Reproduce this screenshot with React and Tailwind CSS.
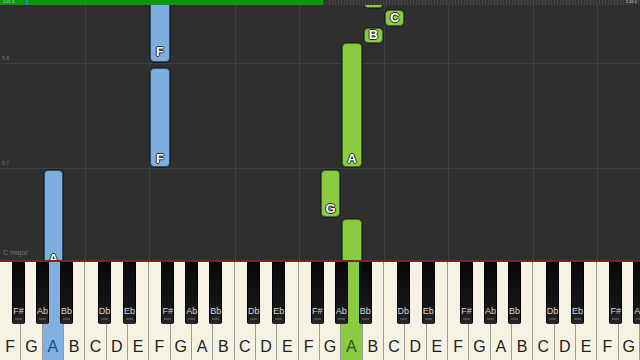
import React from "react";

const KW = 640 / 30;
const WHITE = ["F","G","A","B","C","D","E"];
const whiteKeys = Array.from({ length: 30 }, (_, i) => WHITE[i % 7]);
const BLACK = [
  { o: 12, l: "F#" },
  { o: 36, l: "Ab" },
  { o: 60, l: "Bb" },
  { o: 98, l: "Db" },
  { o: 123, l: "Eb" },
];
const blackKeys = [];
for (let k = 0; k < 5; k++) {
  for (const b of BLACK) {
    const x = k * KW * 7 + b.o;
    if (x < 640) blackKeys.push({ x, l: b.l });
  }
}

// notes: key index, top, bottom (page y), color, label
const notes = [
  { k: 7, t: -4, b: 62, c: "blue", l: "F", lb: 51 },
  { k: 7, t: 68, b: 167, c: "blue", l: "F" },
  { k: 2, t: 170, b: 270, c: "blue", l: "A", lb: 258 },
  { k: 16, t: 43, b: 167, c: "green", l: "A" },
  { k: 15, t: 170, b: 217, c: "green", l: "G" },
  { k: 16, t: 219, b: 290, c: "green", l: "" },
  { k: 17, t: 28, b: 43, c: "green", l: "B" },
  { k: 18, t: 10, b: 26, c: "green", l: "C" },
  { k: 17, t: -12, b: 8, c: "green", l: "B" },
];

const vLines = [4, 7, 11, 14, 18, 21, 25, 28];

function Note({ n }) {
  const blue = n.c === "blue";
  const top = n.t - 5;
  const h = n.b - n.t;
  const labelY = (n.lb ?? n.b - 9) - 5;
  return (
    <>
      <div
        className={
          "absolute rounded-[4px] border " +
          (blue
            ? "bg-[#7eaedd] border-[#2c4d6e] shadow-[0_0_0_1px_#1f1f1f]"
            : "bg-[#8acb42] border-[#3d6b17] shadow-[0_0_0_1px_#1f1f1f]")
        }
        style={{ left: n.k * KW + 1, width: KW - 2, top, height: h }}
      />
      {n.l && (
        <div
          className="absolute flex items-center justify-center text-[13px] font-bold text-white leading-none [text-shadow:-1px_0_#2a2a2a,1px_0_#2a2a2a,0_-1px_#2a2a2a,0_1px_#2a2a2a]"
          style={{ left: n.k * KW, width: KW, top: labelY - 7, height: 14 }}
        >
          {n.l}
        </div>
      )}
    </>
  );
}

export default function App() {
  return (
    <div className="w-[640px] h-[360px] flex flex-col overflow-hidden bg-[#2e2e2e] antialiased [font-family:'Liberation_Sans',Arial,sans-serif]">
      {/* top progress bar */}
      <div className="h-[5px] flex shrink-0 relative bg-[#3b3b3b]">
        <div className="w-[323px] h-full bg-[#0b960b]" />
        <div className="flex-1 h-full bg-[repeating-linear-gradient(90deg,#444_0,#444_1px,#333_1px,#333_3px)]" />
        <span className="absolute left-[3px] top-[0px] text-[4px] leading-none text-[#cde]">1:21.3</span>
        <div className="absolute left-[26px] top-[0px] w-[2px] h-[5px] bg-[#3a7bd5]" />
        <span className="absolute right-[3px] top-[0px] text-[4px] leading-none text-[#ccc]">2:45.0</span>
      </div>

      {/* note roll */}
      <div className="relative h-[255px] shrink-0 overflow-hidden bg-[#2f2f2f]">
        {vLines.map((i) => (
          <div
            key={i}
            className="absolute top-0 bottom-0 w-px bg-[#404040]"
            style={{ left: Math.round(i * KW) }}
          />
        ))}
        <div className="absolute left-0 right-0 top-[58px] h-px bg-[#3f3f3f]" />
        <div className="absolute left-0 right-0 top-[163px] h-px bg-[#3f3f3f]" />
        <span className="absolute left-[2px] top-[51px] text-[5px] leading-none text-[#777]">5.8</span>
        <span className="absolute left-[2px] top-[156px] text-[5px] leading-none text-[#777]">5.7</span>
        <span className="absolute left-[3px] top-[244px] text-[7px] leading-none text-[#777]">C major</span>
        {notes.map((n, i) => (
          <Note key={i} n={n} />
        ))}
      </div>

      {/* red line */}
      <div className="h-[2px] shrink-0 bg-[#7e2222]" />

      {/* keyboard */}
      <div className="relative flex-1 flex">
        {whiteKeys.map((l, i) => {
          const blue = i === 2;
          const green = i === 16;
          return (
            <div
              key={i}
              className={
                "flex-1 h-full border-r border-[#9a9a9a] flex items-end justify-center pb-[5px] " +
                (blue ? "bg-[#80b1e1]" : green ? "bg-[#8acb42]" : "bg-[#f6f2e4]")
              }
            >
              <span
                className={
                  "text-[16px] leading-none " +
                  (blue ? "text-[#1d4a7e]" : green ? "text-[#2a5512]" : "text-[#222]")
                }
              >
                {l}
              </span>
            </div>
          );
        })}
        {blackKeys.map((b, i) => (
          <div
            key={i}
            className="absolute top-0 w-[13px] h-[62px] rounded-b-[2px] bg-[linear-gradient(180deg,#080808_0%,#161616_70%,#262626_100%)] border-x border-[#000] flex flex-col items-center justify-end pb-[4px]"
            style={{ left: b.x }}
          >
            <span className="text-[9px] leading-none text-[#d8d8d8]">{b.l}</span>
            <div className="mt-[2px] w-[7px] h-[2px] bg-[#4a4a4a]" />
          </div>
        ))}
      </div>
    </div>
  );
}
